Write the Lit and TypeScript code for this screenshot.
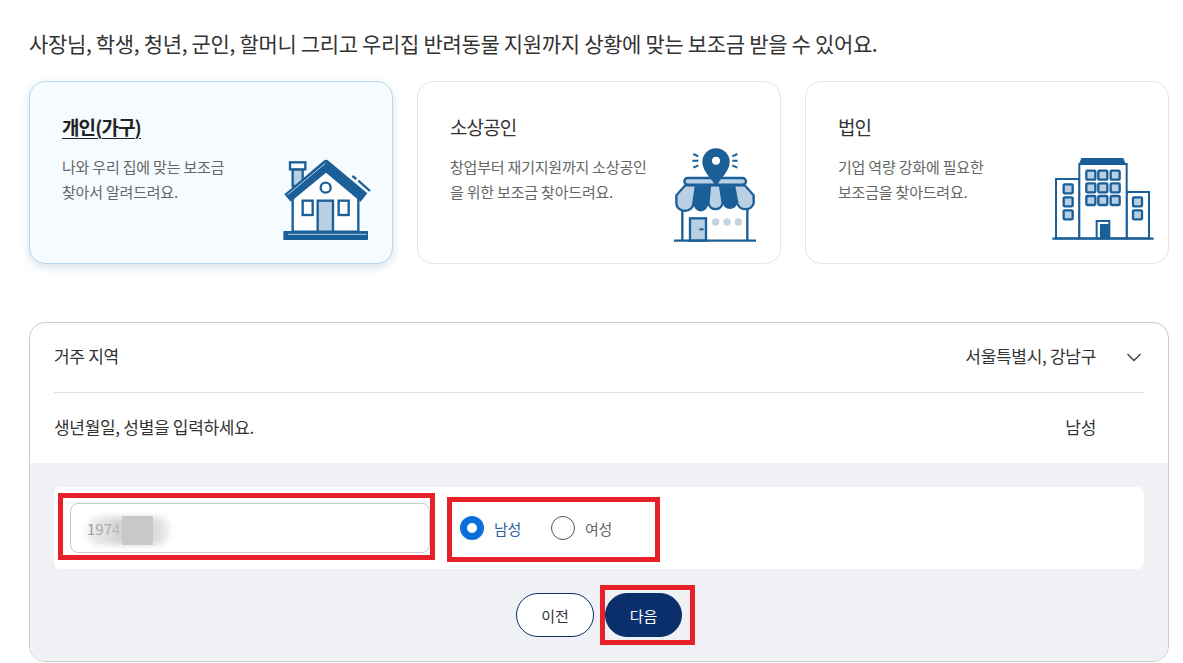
import { LitElement, css, html, svg } from 'lit';
import { customElement } from 'lit/decorators.js';

const BLUE = '#1b5f98';
const LIGHT = '#b9cfe3';

const houseIcon = svg`
  <rect x="68" y="58" width="30" height="50" fill="${LIGHT}" stroke="${BLUE}" stroke-width="7"/>
  <rect x="60" y="37" width="46" height="21" fill="#f5fbfe" stroke="${BLUE}" stroke-width="7"/>
  <path d="M68 140 L168 60 L265 140 V245 H68 Z" fill="#fff" stroke="${BLUE}" stroke-width="7"/>
  <path d="M43 133 L160 33 Q168 26 176 33 L292 130 L272 155 L168 68 L62 155 Z" fill="${BLUE}"/>
  <path d="M52 135 L166 40" stroke="${LIGHT}" stroke-width="3" fill="none"/>
  <circle cx="167" cy="113" r="15" fill="#fff" stroke="${BLUE}" stroke-width="7"/>
  <rect x="98" y="152" width="30" height="43" fill="#fff" stroke="${BLUE}" stroke-width="7"/>
  <rect x="206" y="152" width="30" height="43" fill="#fff" stroke="${BLUE}" stroke-width="7"/>
  <rect x="143" y="152" width="46" height="93" fill="${LIGHT}" stroke="${BLUE}" stroke-width="7"/>
  <rect x="40" y="243" width="254" height="27" rx="2" fill="${BLUE}"/>
  <path d="M54 253 H290" stroke="${LIGHT}" stroke-width="3"/>
  <path d="M247 78 L259 87 M265 92 L300 123" stroke="${BLUE}" stroke-width="7" fill="none"/>
`;

const storeIcon = svg`
  <path d="M67 205 V302 M262 205 V302" stroke="${BLUE}" stroke-width="7"/>
  <rect x="90" y="235" width="48" height="67" fill="${LIGHT}" stroke="${BLUE}" stroke-width="7"/>
  <path d="M118 268 H131" stroke="${BLUE}" stroke-width="6"/>
  <circle cx="167" cy="246" r="11" fill="#c3d3e2"/>
  <circle cx="201" cy="246" r="11" fill="#c3d3e2"/>
  <circle cx="235" cy="246" r="11" fill="#c3d3e2"/>
  <path d="M42 302 H288" stroke="${BLUE}" stroke-width="7"/>
  <rect x="73" y="114" width="185" height="20" rx="10" fill="${LIGHT}" stroke="${BLUE}" stroke-width="7"/>
  <path d="M76 136 L49 166 V190 A25 22 0 0 0 100 190 L108 136 Z" fill="${LIGHT}" stroke="${BLUE}" stroke-width="7"/>
  <path d="M254 136 L281 166 V190 A25 22 0 0 1 232 190 L222 136 Z" fill="${LIGHT}" stroke="${BLUE}" stroke-width="7"/>
  <path d="M108 136 H150 L145 190 A22 24 0 0 1 100 190 Z" fill="${BLUE}"/>
  <path d="M180 136 H222 L232 190 A23 24 0 0 1 188 190 Z" fill="${BLUE}"/>
  <path d="M150 136 H180 L188 190 A22 22 0 0 1 145 190 Z" fill="${LIGHT}" stroke="${BLUE}" stroke-width="7"/>
  <path fill-rule="evenodd" fill="${BLUE}" d="M168 142 C158 116 127 96 127 66 A41 41 0 0 1 209 66 C209 96 178 116 168 142 Z M168 50 A12 12 0 1 0 168 74 A12 12 0 1 0 168 50 Z"/>
  <path d="M100 42 L115 49 M97 62 H115 M100 83 L115 76 M232 42 L217 49 M233 62 H217 M232 83 L217 76" stroke="${BLUE}" stroke-width="6" fill="none"/>
`;

const win = (x: number, y: number) => svg`
  <rect x="${x}" y="${y}" width="27" height="27" rx="3" fill="${LIGHT}" stroke="${BLUE}" stroke-width="7"/>
`;

const buildingIcon = svg`
  <rect x="48" y="87" width="70" height="178" fill="#fff" stroke="${BLUE}" stroke-width="6"/>
  <rect x="260" y="126" width="67" height="139" fill="#fff" stroke="${BLUE}" stroke-width="6"/>
  <rect x="118" y="42" width="142" height="223" fill="#fff" stroke="${BLUE}" stroke-width="6"/>
  <path d="M116 44 L124 24 H250 L258 44 Z" fill="${BLUE}"/>
  ${[62, 100, 138].flatMap(y => [139, 175, 212].map(x => win(x, y)))}
  ${[103, 142, 181].map(y => win(71, y))}
  ${[142, 181].map(y => win(279, y))}
  <rect x="170" y="213" width="38" height="52" fill="#fff" stroke="${BLUE}" stroke-width="6"/>
  <rect x="180" y="222" width="30" height="43" fill="${BLUE}"/>
  <path d="M37 266 H341" stroke="${BLUE}" stroke-width="7"/>
`;

@customElement('app-root')
export class AppRoot extends LitElement {
  static styles = css`
    * {
      box-sizing: border-box;
    }

    :host {
      display: block;
      box-sizing: border-box;
      width: 1183px;
      height: 663px;
      overflow: hidden;
      background: #fff;
      padding: 0 14px 0 29px;
      font-family: 'Noto Sans CJK KR', 'Noto Sans', sans-serif;
      color: #222;
      position: relative;
    }

    .headline {
      margin: 0;
      padding-top: 28px;
      height: 81px;
      font-size: 21px;
      line-height: 30px;
      font-weight: 400;
      letter-spacing: -0.33px;
      color: #333;
    }

    .cards {
      display: grid;
      grid-template-columns: repeat(3, 364px);
      gap: 24px;
    }

    .card {
      height: 183px;
      border: 1px solid #e3e5e8;
      border-radius: 16px;
      background: #fff;
      display: flex;
      justify-content: space-between;
      align-items: flex-end;
      padding: 0 0 13px 32px;
    }

    .card.active {
      background: #f5fbfe;
      border-color: #b9d6ea;
      box-shadow: 0 3px 8px rgba(90, 140, 180, 0.25);
    }

    .card-text {
      align-self: flex-start;
      padding-top: 30px;
    }

    .card-title {
      font-size: 19px;
      line-height: 30px;
      letter-spacing: -0.9px;
      color: #333;
    }

    .active .card-title {
      font-weight: 700;
      color: #222;
      text-decoration: underline;
      text-underline-offset: 3px;
    }

    .card-desc {
      margin-top: 12px;
      font-size: 15px;
      line-height: 25px;
      letter-spacing: -0.2px;
      color: #666;
    }

    .icon-house {
      width: 120px;
      height: 100px;
      margin-right: 2px;
    }

    .icon-store {
      width: 110px;
      height: 110px;
      margin-right: 10px;
    }

    .icon-building {
      width: 125px;
      height: 100px;
      margin-right: 3px;
    }

    .panel {
      margin-top: 58px;
      height: 340px;
      border: 1px solid #c9ccd1;
      border-radius: 16px;
      overflow: hidden;
      display: flex;
      flex-direction: column;
    }

    .rows {
      padding: 0 24px;
    }

    .row {
      height: 69px;
      display: flex;
      justify-content: space-between;
      align-items: center;
      font-size: 17px;
      letter-spacing: -0.3px;
      color: #333;
      padding-bottom: 4px;
    }

    .row + .row {
      border-top: 1px solid #dfe1e4;
      height: 71px;
      padding-bottom: 4px;
    }

    .row-value {
      display: flex;
      align-items: center;
      gap: 27px;
      padding-right: 48px;
    }

    .row.has-chevron .row-value {
      padding-right: 0;
    }

    .chevron {
      margin: 2px -1px 0 0;
    }

    .form {
      flex: 1;
      background: #eff1f5;
      padding: 24px 24px 0;
    }

    .fields {
      height: 82px;
      border-radius: 6px;
      background: #fff;
      display: flex;
      align-items: center;
      padding-left: 16px;
    }

    .input {
      width: 360px;
      height: 50px;
      border: 1px solid #c8c8c8;
      border-radius: 8px;
      display: flex;
      align-items: center;
      padding-left: 16px;
      font-size: 15px;
      color: #888;
      position: relative;
    }

    .smudge {
      position: absolute;
      left: 15px;
      top: 13px;
      width: 84px;
      height: 28px;
      background: linear-gradient(
        90deg,
        rgba(200, 200, 200, 0.25),
        rgba(200, 200, 200, 0.8) 40%,
        rgba(210, 210, 210, 0.85) 80%,
        rgba(235, 235, 235, 0.8)
      );
      border-radius: 12px;
      filter: blur(3px);
    }

    .smudge-block {
      position: absolute;
      left: 51px;
      top: 12px;
      width: 31px;
      height: 29px;
      background: #c8c8c8;
    }

    .radios {
      display: flex;
      align-items: center;
      margin-left: 30px;
      font-size: 15px;
      letter-spacing: -0.3px;
    }

    .radio {
      display: flex;
      align-items: center;
      gap: 10px;
      color: #666;
      margin-right: 30px;
    }

    .radio.on {
      color: #2b5f9e;
    }

    .dot {
      width: 24px;
      height: 24px;
      border-radius: 50%;
      border: 1px solid #555;
      background: #fff;
    }

    .on .dot {
      border: 7px solid #0a6fdc;
    }

    .actions {
      display: flex;
      justify-content: center;
      gap: 11px;
      margin-top: 24px;
    }

    .btn {
      width: 78px;
      height: 44px;
      border-radius: 22px;
      border: 1px solid #0b2f6b;
      background: #fff;
      color: #333;
      font: inherit;
      font-size: 15px;
      padding: 0;
    }

    .btn.primary {
      width: 77px;
      background: #0b2f6b;
      color: #fff;
    }

    .mark {
      position: absolute;
      border: 5px solid #e8202a;
      pointer-events: none;
    }

    .mark-input {
      left: 58px;
      top: 493px;
      width: 377px;
      height: 67px;
    }

    .mark-radio {
      left: 447px;
      top: 497px;
      width: 213px;
      height: 65px;
    }

    .mark-next {
      left: 600px;
      top: 585px;
      width: 95px;
      height: 60px;
    }
  `;

  render() {
    return html`
      <h1 class="headline">
        사장님, 학생, 청년, 군인, 할머니 그리고 우리집 반려동물 지원까지 상황에
        맞는 보조금 받을 수 있어요.
      </h1>
      <div class="cards">
        <div class="card active">
          <div class="card-text">
            <div class="card-title">개인(가구)</div>
            <div class="card-desc">나와 우리 집에 맞는 보조금<br />찾아서 알려드려요.</div>
          </div>
          <svg class="icon-house" viewBox="0 0 360 300">${houseIcon}</svg>
        </div>
        <div class="card">
          <div class="card-text">
            <div class="card-title">소상공인</div>
            <div class="card-desc">창업부터 재기지원까지 소상공인<br />을 위한 보조금 찾아드려요.</div>
          </div>
          <svg class="icon-store" viewBox="0 0 330 330">${storeIcon}</svg>
        </div>
        <div class="card">
          <div class="card-text">
            <div class="card-title">법인</div>
            <div class="card-desc">기업 역량 강화에 필요한<br />보조금을 찾아드려요.</div>
          </div>
          <svg class="icon-building" viewBox="0 0 375 300">${buildingIcon}</svg>
        </div>
      </div>
      <div class="panel">
        <div class="rows">
          <div class="row has-chevron">
            <span>거주 지역</span>
            <span class="row-value">
              서울특별시, 강남구
              <svg class="chevron" width="22" height="22" viewBox="0 0 22 22" fill="none" stroke="#444" stroke-width="1.5">
                <path d="M4.5 8 L11 14.5 L17.5 8" />
              </svg>
            </span>
          </div>
          <div class="row">
            <span>생년월일, 성별을 입력하세요.</span>
            <span class="row-value">남성</span>
          </div>
        </div>
        <div class="form">
          <div class="fields">
            <div class="input">
              <span>1974</span>
              <span class="smudge"></span>
              <span class="smudge-block"></span>
            </div>
            <div class="radios">
              <label class="radio on"><span class="dot"></span>남성</label>
              <label class="radio"><span class="dot"></span>여성</label>
            </div>
          </div>
          <div class="actions">
            <button class="btn">이전</button>
            <button class="btn primary">다음</button>
          </div>
        </div>
      </div>
      <div class="mark mark-input"></div>
      <div class="mark mark-radio"></div>
      <div class="mark mark-next"></div>
    `;
  }
}
